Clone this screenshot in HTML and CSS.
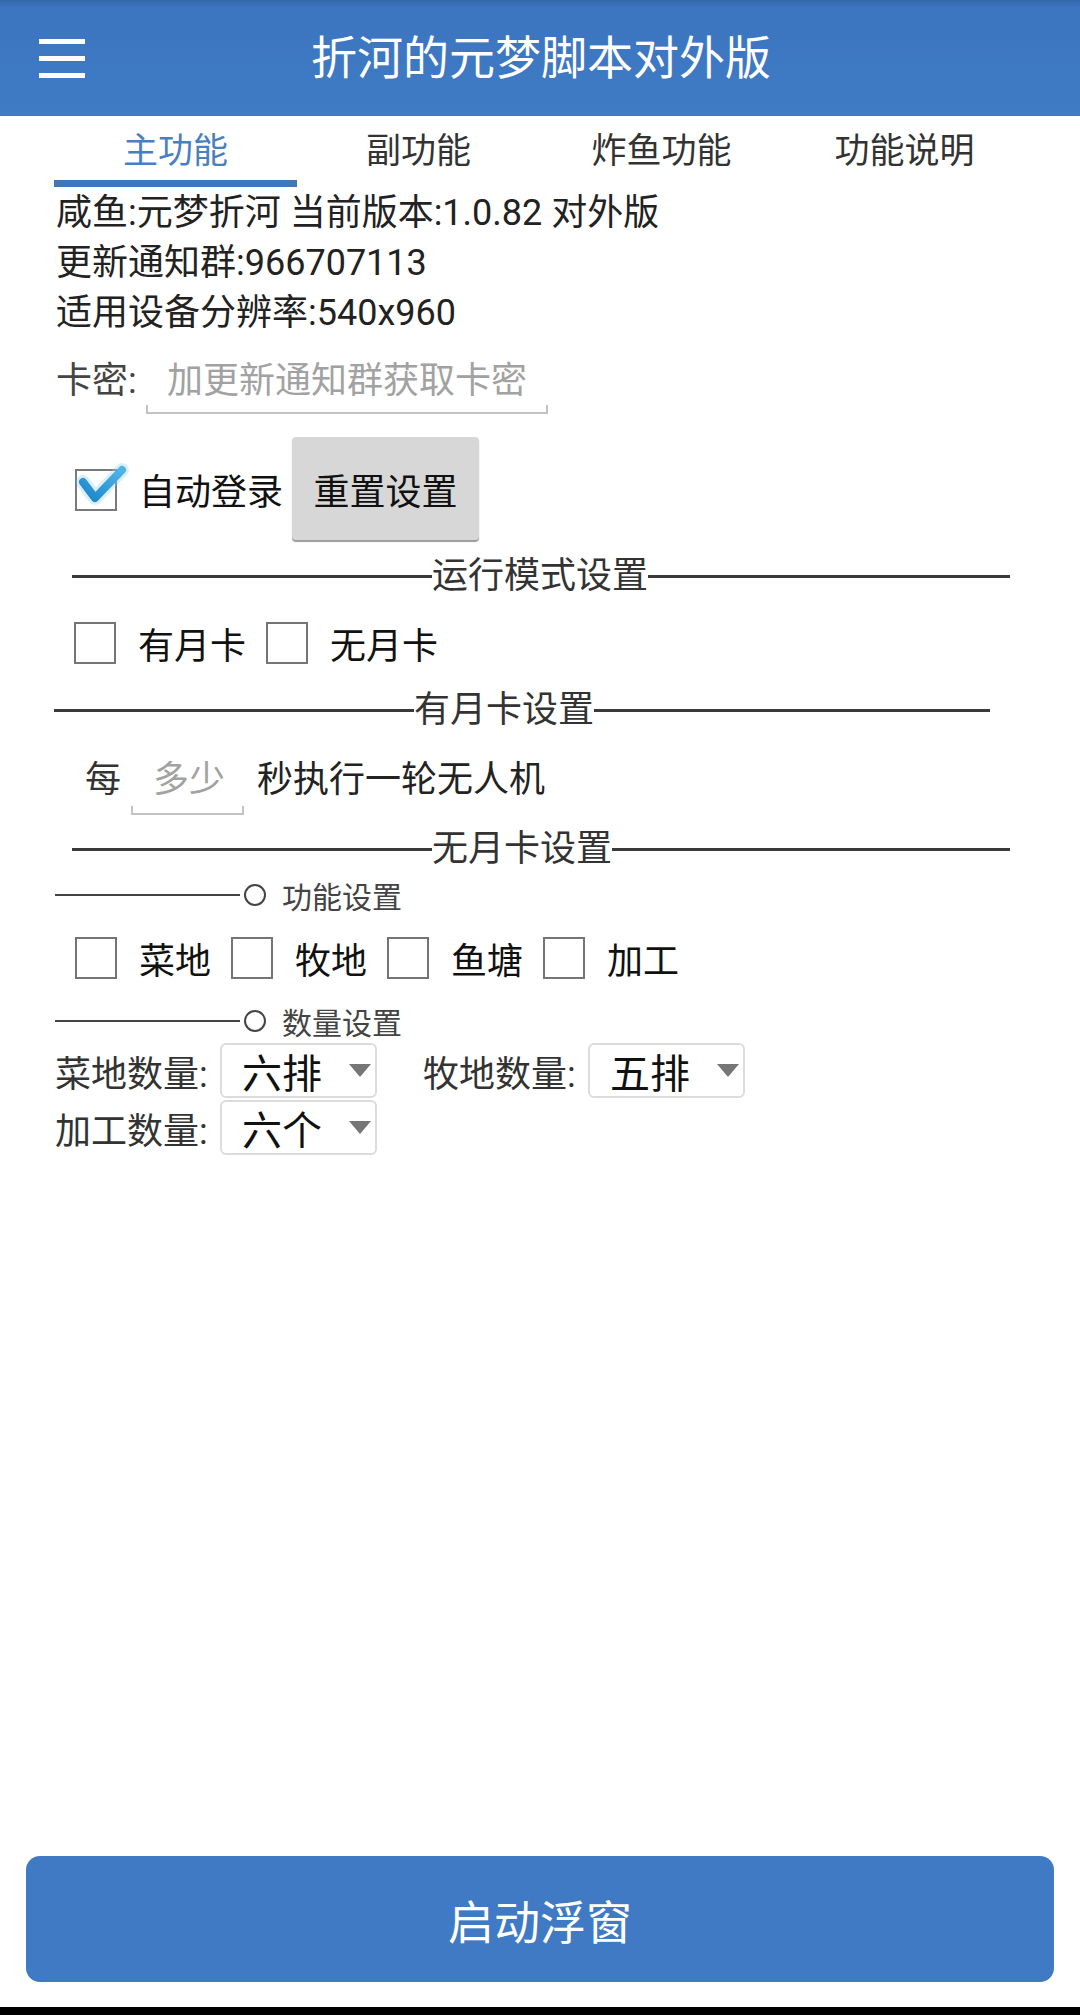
FILE: index.html
```html
<!DOCTYPE html>
<html lang="zh-CN">
<head>
<meta charset="utf-8">
<title>折河的元梦脚本对外版</title>
<link rel="stylesheet" href="styles.css">
</head>
<body>
<header class="appbar">
  <div class="menu-cell">
    <div class="menu"><span></span><span></span><span></span></div>
  </div>
  <h1 class="title">折河的元梦脚本对外版</h1>
  <div class="menu-cell"></div>
</header>

<nav class="tabs">
  <div class="tab active">主功能</div>
  <div class="tab">副功能</div>
  <div class="tab">炸鱼功能</div>
  <div class="tab">功能说明</div>
</nav>

<section class="info">
  <div>咸鱼:元梦折河 当前版本:1.0.82 对外版</div>
  <div>更新通知群:966707113</div>
  <div>适用设备分辨率:540x960</div>
</section>

<div class="key-row">
  <label class="key-label" for="key">卡密:</label>
  <input id="key" class="field key-field" type="text" placeholder="加更新通知群获取卡密">
</div>

<div class="login-row">
  <svg class="checked" width="52" height="46" viewBox="0 0 52 46" aria-hidden="true">
    <defs>
      <linearGradient id="chk" x1="0" y1="1" x2="1" y2="0">
        <stop offset="0" stop-color="#1b86c8"/>
        <stop offset="1" stop-color="#4fb4e8"/>
      </linearGradient>
    </defs>
    <rect x="1" y="4" width="40" height="40" fill="#fff" stroke="#7a7a7a" stroke-width="2"/>
    <path d="M8 16 L20 32 L47 4" fill="none" stroke="#8fd0f2" stroke-opacity="0.35" stroke-width="14" stroke-linecap="round" stroke-linejoin="round"/>
    <path d="M8 16 L20 32 L47 4" fill="none" stroke="url(#chk)" stroke-width="8" stroke-linecap="round" stroke-linejoin="round"/>
  </svg>
  <span class="login-label">自动登录</span>
  <button class="reset-btn" type="button">重置设置</button>
</div>

<div class="divider d1">
  <span class="line left"></span><span class="dtext">运行模式设置</span><span class="line r1"></span>
</div>

<div class="check-row mode-row">
  <div class="check-item"><span class="box"></span><span>有月卡</span></div>
  <div class="check-item"><span class="box"></span><span>无月卡</span></div>
</div>

<div class="divider d2">
  <span class="line left"></span><span class="dtext">有月卡设置</span><span class="line r2"></span>
</div>

<div class="interval-row">
  <span class="each">每</span>
  <input class="field small-field" type="text" placeholder="多少">
  <span class="interval-text">秒执行一轮无人机</span>
</div>

<div class="divider d3">
  <span class="line left"></span><span class="dtext">无月卡设置</span><span class="line r3"></span>
</div>

<div class="subhead sh1">
  <span class="sline"></span><span class="ring"></span><span class="stext">功能设置</span>
</div>

<div class="check-row func-row">
  <div class="check-item"><span class="box"></span><span>菜地</span></div>
  <div class="check-item"><span class="box"></span><span>牧地</span></div>
  <div class="check-item"><span class="box"></span><span>鱼塘</span></div>
  <div class="check-item"><span class="box"></span><span>加工</span></div>
</div>

<div class="subhead sh2">
  <span class="sline"></span><span class="ring"></span><span class="stext">数量设置</span>
</div>

<div class="select-row first">
  <span class="sel-label">菜地数量:</span>
  <div class="select"><span>六排</span><i class="arrow"></i></div>
  <span class="sel-label second">牧地数量:</span>
  <div class="select"><span>五排</span><i class="arrow"></i></div>
</div>
<div class="select-row">
  <span class="sel-label">加工数量:</span>
  <div class="select"><span>六个</span><i class="arrow"></i></div>
</div>

<footer class="footer">
  <button class="start-btn" type="button">启动浮窗</button>
</footer>
<div class="navbar"></div>
</body>
</html>
```

FILE: styles.css
```css
* { box-sizing: border-box; }

html, body { margin: 0; padding: 0; }

body {
  width: 1080px;
  height: 2015px;
  display: flex;
  flex-direction: column;
  background: #fff;
  color: #222;
  font-family: Roboto, "Noto Sans CJK SC", sans-serif;
  overflow: hidden;
}

/* App bar */
.appbar {
  flex: none;
  height: 116px;
  display: grid;
  grid-template-columns: 1fr auto 1fr;
  align-items: center;
  background: linear-gradient(#3368ad 0, #3c75bf 8px, #3f7bc5 100%);
}
.menu-cell { display: flex; align-items: center; padding-left: 39px; }
.menu { display: flex; flex-direction: column; gap: 12px; width: 46px; }
.menu span { display: block; height: 5px; background: #fff; }
.title {
  margin: 0 0 0 2px;
  font-size: 46px;
  font-weight: 400;
  color: #fff;
  line-height: 1;
}

/* Tabs */
.tabs { flex: none; display: flex; margin: 0 54px; }
.tab {
  flex: 1;
  text-align: center;
  font-size: 35px;
  color: #333;
  padding-top: 8px;
  height: 71px;
  line-height: 56px;
  border-bottom: 7px solid transparent;
}
.tab.active { color: #4a7fbf; border-bottom-color: #3f77bd; }

/* Info */
.info {
  flex: none;
  padding-left: 56px;
  padding-top: 1px;
  font-size: 36px;
  line-height: 50px;
  color: #222;
}

/* Inputs */
.field {
  display: block;
  border: none;
  outline: none;
  font-family: inherit;
  font-size: 36px;
  line-height: 50px;
  color: #222;
  background:
    linear-gradient(#c3c3c3, #c3c3c3) left bottom / 2px 9px no-repeat,
    linear-gradient(#c3c3c3, #c3c3c3) right bottom / 2px 9px no-repeat,
    linear-gradient(#c3c3c3, #c3c3c3) left bottom / 100% 2px no-repeat;
  margin: 0;
}
.field::placeholder { color: #a2a2a2; }

.key-row {
  flex: none;
  display: flex;
  align-items: flex-start;
  margin: 18px 0 0 56px;
}
.key-label { width: 90px; font-size: 36px; line-height: 50px; color: #444; }
.key-field { width: 402px; height: 58px; padding: 0 0 8px 21px; }

/* Login row */
.login-row {
  flex: none;
  display: flex;
  align-items: center;
  height: 103px;
  margin-top: 23px;
  padding-left: 75px;
}
.checked { display: block; overflow: visible; }
.login-label { margin-left: 12px; font-size: 36px; color: #111; width: 144px; }
.reset-btn {
  margin-left: 9px;
  width: 187px;
  height: 103px;
  border: none;
  border-radius: 4px;
  background: #d7d7d7;
  box-shadow: 0 2px 1px #9c9c9c;
  font-family: inherit;
  font-size: 36px;
  color: #111;
  padding: 0;
}

/* Dividers */
.divider {
  flex: none;
  display: flex;
  align-items: center;
  height: 50px;
  font-size: 36px;
  color: #333;
}
.divider .line { display: block; height: 3px; background: #3a3a3a; }
.divider .left { width: 360px; }
.divider .r1 { width: 362px; }
.divider .r2 { width: 396px; }
.divider .r3 { width: 398px; }
.dtext { line-height: 50px; }
.d1 { margin: 11px 0 0 72px; }
.d2 { margin: 17px 0 0 54px; }
.d3 { margin: 9px 0 0 72px; }

/* Check rows */
.check-row {
  flex: none;
  display: flex;
  align-items: center;
  gap: 20px;
  height: 50px;
  font-size: 36px;
  color: #111;
}
.check-item { display: flex; align-items: center; gap: 22px; }
.box { display: block; width: 42px; height: 42px; border: 2px solid #757575; background: #fff; }
.mode-row { margin-top: 17px; padding-left: 74px; }
.func-row { margin-top: 18px; padding-left: 75px; }

/* Interval row */
.interval-row {
  flex: none;
  display: flex;
  align-items: flex-start;
  margin-top: 20px;
  padding-left: 85px;
  font-size: 36px;
  line-height: 50px;
  color: #222;
}
.each { width: 36px; color: #333; }
.small-field { margin-left: 10px; width: 113px; height: 60px; padding: 0 0 10px 22px; }
.interval-text { margin-left: 13px; }

/* Sub headers */
.subhead {
  flex: none;
  display: flex;
  align-items: center;
  height: 40px;
  padding-left: 55px;
  font-size: 30px;
  color: #444;
}
.sline { display: block; width: 185px; height: 2px; background: #444; }
.ring { display: block; width: 22px; height: 22px; margin-left: 4px; border: 2px solid #444; border-radius: 50%; }
.stext { margin-left: 16px; }
.sh1 { margin-top: 1px; }
.sh2 { margin-top: 18px; }

/* Selects */
.select-row {
  flex: none;
  display: flex;
  align-items: center;
  height: 55px;
  margin-top: 2px;
  padding-left: 55px;
  font-size: 36px;
  color: #333;
}
.select-row.first { margin-top: 2px; }
.sel-label { width: 165px; }
.sel-label.second { margin-left: 46px; }
.select {
  display: flex;
  align-items: center;
  width: 157px;
  height: 55px;
  border: 2px solid #dcdcdc;
  border-radius: 6px;
  padding-left: 20px;
  font-size: 40px;
  color: #111;
}
.arrow {
  display: block;
  margin-left: auto;
  margin-right: 4px;
  width: 0;
  height: 0;
  border-left: 11px solid transparent;
  border-right: 11px solid transparent;
  border-top: 13px solid #767676;
}

/* Footer */
.footer { flex: none; margin-top: auto; padding: 0 26px 25px; }
.start-btn {
  display: block;
  width: 100%;
  height: 126px;
  border: none;
  border-radius: 14px;
  background: #417ac4;
  color: #fff;
  font-family: inherit;
  font-size: 46px;
  padding: 0;
}
.navbar { flex: none; height: 8px; background: #000; }
```
